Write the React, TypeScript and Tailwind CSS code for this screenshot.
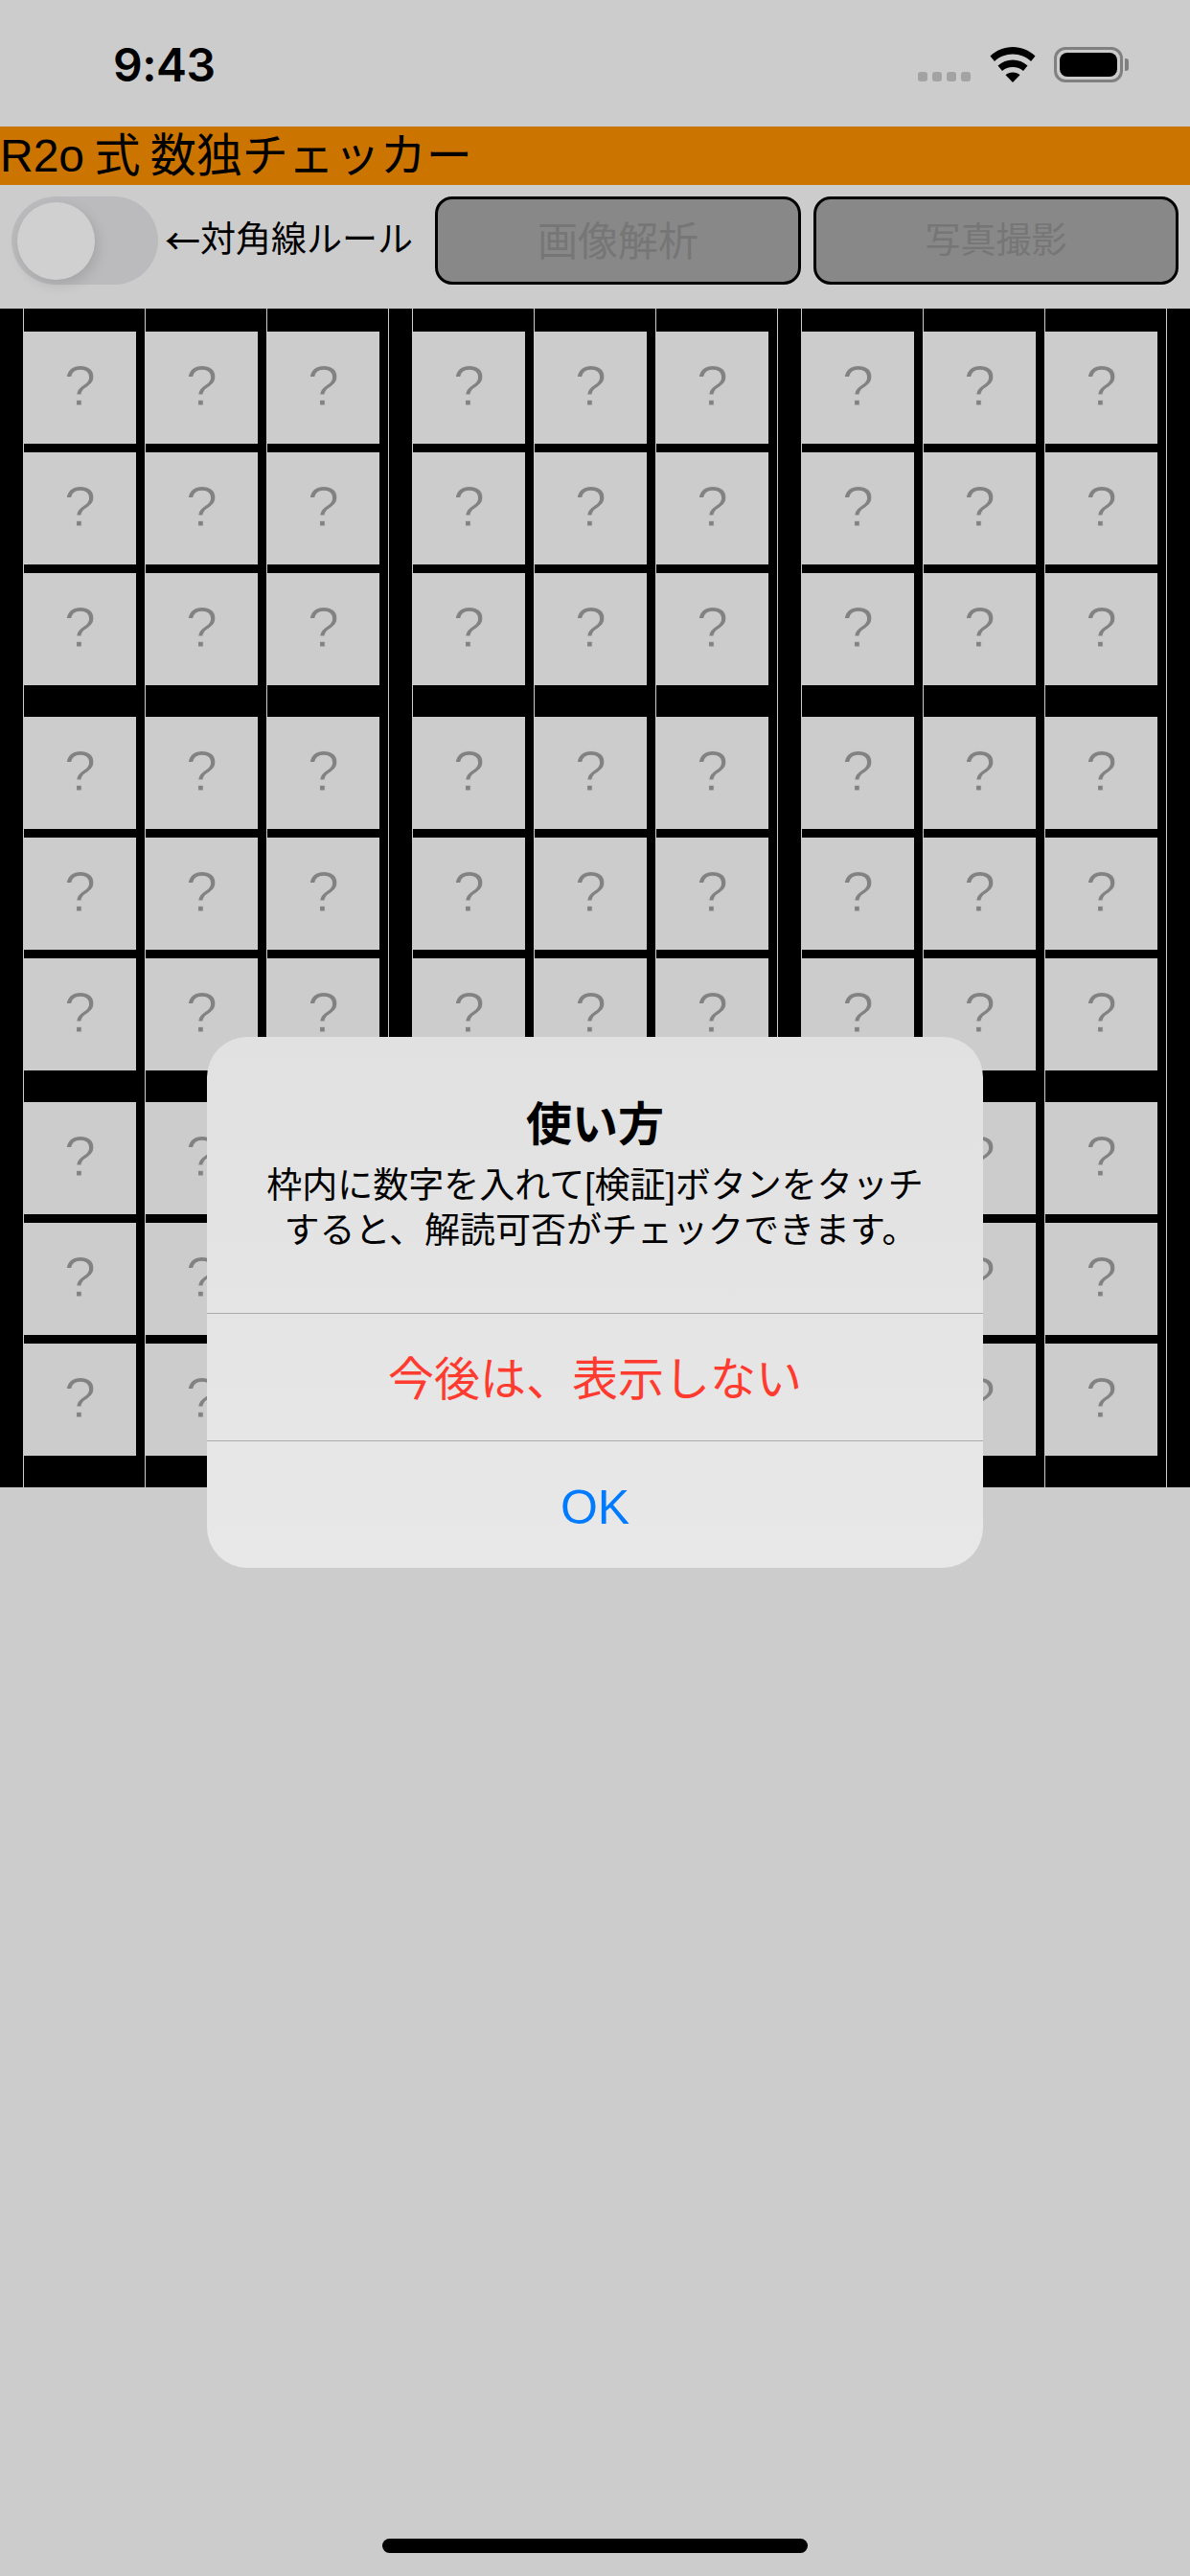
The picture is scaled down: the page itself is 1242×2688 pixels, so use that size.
const CJK = "font-['Liberation_Sans','Noto_Sans_CJK_JP',sans-serif]";

const bandGaps = [
  "mb-[9px]", "mb-[9px]", "mb-[33px]",
  "mb-[9px]", "mb-[9px]", "mb-[33px]",
  "mb-[9px]", "mb-[9px]", "mb-[33px]",
];

function Cell({ gap }: { gap: string }) {
  return (
    <div className={`w-[117px] h-[117px] bg-[#cccccc] flex items-center justify-center ${gap}`}>
      <span className="text-[60px] leading-none text-[#828282] [-webkit-text-stroke:1px_#cccccc] font-['Liberation_Sans',sans-serif] -mt-[3px]">?</span>
    </div>
  );
}

function Column() {
  return (
    <div className="w-[127px] border-l border-[#cccccc] pt-[24px] flex flex-col">
      {bandGaps.map((gap, i) => (
        <Cell key={i} gap={gap} />
      ))}
    </div>
  );
}

function Block() {
  return (
    <div className="pl-[24px] flex">
      <Column />
      <Column />
      <Column />
      <div className="w-px bg-[#cccccc]" />
    </div>
  );
}

function StatusBar() {
  return (
    <div className="h-[132px] relative">
      <div className="flex items-start pl-[118px] pr-[64px] pt-[43px] justify-between">
        <span className="text-[48px] leading-[50px] tracking-[-0.5px] font-semibold text-black font-['Inter',sans-serif]">9:43</span>
        <div className="flex items-start pt-[6px]">
          <div className="flex gap-[5px] mt-[26px] mr-[20px]">
            <span className="w-[10px] h-[10px] rounded-[3px] bg-[#a3a3a3]" />
            <span className="w-[10px] h-[10px] rounded-[3px] bg-[#a3a3a3]" />
            <span className="w-[10px] h-[10px] rounded-[3px] bg-[#a3a3a3]" />
            <span className="w-[10px] h-[10px] rounded-[3px] bg-[#a3a3a3]" />
          </div>
          <svg width="48" height="37" viewBox="0 0 48 37" className="mr-[19px]">
            <path d="M24 0C15 0 7 3.400 0.500 9.500L5 15C10 10.300 16.500 7.500 24 7.500C31.500 7.500 38 10.300 43 15L47.500 9.500C41 3.400 33 0 24 0Z" fill="#000" />
            <path d="M24 13.500C18 13.500 13 15.700 8.500 19.500L13 25C16 22.500 19.700 21 24 21C28.300 21 32 22.500 35 25L39.500 19.500C35 15.700 30 13.500 24 13.500Z" fill="#000" />
            <path d="M24 26.500C21 26.500 18.500 27.500 16.500 29.200L24 37L31.500 29.200C29.500 27.500 27 26.500 24 26.500Z" fill="#000" />
          </svg>
          <div className="w-[72px] h-[37px] rounded-[12px] border-[3px] border-[#808080] p-[3px]">
            <div className="w-full h-full rounded-[8px] bg-black" />
          </div>
          <div className="w-[4px] h-[13px] mt-[12px] ml-[2px] rounded-r-[3px] bg-[#808080]" />
        </div>
      </div>
    </div>
  );
}

function Toolbar() {
  return (
    <div className={`h-[129px] flex items-start pt-[12px] ${CJK}`}>
      <div className="ml-[12px] w-[153px] h-[92px] rounded-full bg-[#bbbbbd] p-[6px]">
        <div className="w-[81px] h-[81px] rounded-full bg-[#d0d0d0] shadow-[3px_5px_14px_rgba(0,0,0,0.12)]" />
      </div>
      <span className="ml-[7px] w-[282px] h-[92px] flex items-center text-[37px] text-black whitespace-nowrap">
        <span className="font-medium font-['Noto_Sans_CJK_JP',sans-serif]">←</span>対角線ルール
      </span>
      <button className="w-[382px] h-[92px] pt-[2px] rounded-[18px] border-[3px] border-black bg-[#888888] text-[42px] text-[#767676]">
        画像解析
      </button>
      <button className="ml-[13px] w-[381px] h-[92px] pt-[2px] rounded-[18px] border-[3px] border-black bg-[#888888] text-[37px] text-[#767676]">
        写真撮影
      </button>
    </div>
  );
}

function Dialog() {
  return (
    <div className={`absolute left-[216px] top-[1082px] w-[810px] rounded-[42px] bg-linear-to-b from-[#e1e1e1] to-[#e8e8e8] ${CJK}`}>
      <div className="h-[288px] pt-[60px] px-[48px] flex flex-col items-center">
        <div className="text-[48px] leading-[64px] font-bold text-black">使い方</div>
        <div className="mt-[8px] text-[37px] leading-[47px] text-black text-center whitespace-nowrap">
          <div>枠内に数字を入れて[検証]ボタンをタッチ</div>
          <div className="pl-[12px]">すると、解読可否がチェックできます。</div>
        </div>
      </div>
      <div className="h-[133px] pt-[6px] border-t border-[#ababab] flex items-center justify-center text-[48px] text-[#ff3b30]">
        今後は、表示しない
      </div>
      <div className="h-[133px] pt-[6px] border-t border-[#ababab] flex items-center justify-center text-[50px] text-[#007aff]">
        OK
      </div>
    </div>
  );
}

export default function App() {
  return (
    <div className="relative w-[1242px] h-[2688px] bg-[#cccccc] overflow-hidden">
      <StatusBar />
      <div className={`h-[61px] bg-[#cb7500] text-[48px] leading-[61px] [word-spacing:-3px] text-black whitespace-nowrap ${CJK}`}>
        R2o 式 数独チェッカー
      </div>
      <Toolbar />
      <div className="flex bg-black h-[1230px] overflow-hidden">
        <Block />
        <Block />
        <Block />
      </div>
      <Dialog />
      <div className="absolute left-[399px] bottom-[24px] w-[444px] h-[15px] rounded-full bg-black" />
    </div>
  );
}
